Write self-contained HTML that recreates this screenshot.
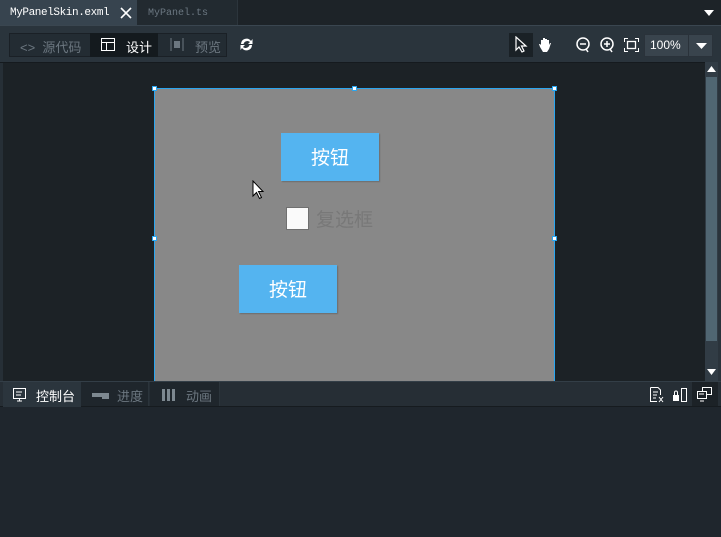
<!DOCTYPE html>
<html><head><meta charset="utf-8"><style>
*{margin:0;padding:0;box-sizing:border-box}
body{width:721px;height:537px;overflow:hidden;background:#1f262d;font-family:"Liberation Sans","Noto Sans CJK SC",sans-serif;position:relative}
.a{position:absolute}
.mono{font-family:"Liberation Mono","Noto Sans CJK SC",monospace}
</style></head><body>
<div class="a" style="left:0;top:0;width:721px;height:26px;background:#1d2328"></div>
<div class="a" style="left:0;top:0;width:137px;height:26px;background:#37444f"></div>
<div class="a mono" style="left:10px;top:7px;font-size:11px;color:#fff;letter-spacing:-0.4px">MyPanelSkin.exml</div>
<svg class="a" style="left:120px;top:7px" width="12" height="12"><path d="M1 1L11 11M11 1L1 11" stroke="#fff" stroke-width="1.6"/></svg>
<div class="a" style="left:137px;top:0;width:101px;height:26px;background:#222a30;border-right:1px solid #2c353c"></div>
<div class="a mono" style="left:148px;top:8px;font-size:10px;color:#6b7781">MyPanel.ts</div>
<svg class="a" style="left:704px;top:10px" width="10" height="6"><path d="M0 0H10L5 6Z" fill="#fff"/></svg>
<div class="a" style="left:0;top:25px;width:721px;height:38px;background:#2a343c;border-top:1px solid #3a4650;border-bottom:1px solid #151a1e"></div>
<div class="a" style="left:9px;top:33px;width:218px;height:24px;background:#232c33;border:1px solid #1a2026"></div>
<div class="a" style="left:90px;top:33px;width:68px;height:24px;background:#141a1e"></div>
<div class="a" style="left:20px;top:37px;font-size:13px;color:#6c7780">&lt;&gt;&nbsp;&nbsp;源代码</div>
<svg class="a" style="left:101px;top:38px" width="14" height="13"><rect x="0.5" y="0.5" width="13" height="12" fill="none" stroke="#fff"/><path d="M0.5 4.5H13.5M5.5 4.5V12.5" stroke="#fff"/></svg>
<div class="a" style="left:126px;top:37px;font-size:13px;color:#fff">设计</div>
<svg class="a" style="left:170px;top:38px" width="14" height="13"><path d="M1 0V13M13 0V13" stroke="#6c7780"/><rect x="4" y="3" width="6" height="7" fill="#6c7780"/></svg>
<div class="a" style="left:195px;top:37px;font-size:13px;color:#6c7780">预览</div>
<svg class="a" style="left:239px;top:37px" width="15" height="15" viewBox="0 0 15 15"><path d="M2 7A5.5 5.5 0 0 1 12 4L13.5 2V7H9L11 5A4 4 0 0 0 4.5 7Z M13 8A5.5 5.5 0 0 1 3 11L1.5 13V8H6L4 10A4 4 0 0 0 10.5 8Z" fill="#fff"/></svg>
<div class="a" style="left:509px;top:33px;width:24px;height:24px;background:#1a2126"></div>
<svg class="a" style="left:515px;top:36px" width="13" height="17" viewBox="0 0 13 17"><path d="M1 1V14L4 11L7 16L9 15L6.5 10H11Z" fill="#1a2126" stroke="#fff" stroke-width="1.2"/></svg>
<svg class="a" style="left:538px;top:36px" width="14" height="16" viewBox="0 0 14 16"><path d="M3 9V4h2V2h2V3h2V4h2V9l1-2h1l-2 6-2 3H5L2 11 1 8h1z" fill="#fff"/></svg>
<svg class="a" style="left:576px;top:37px" width="16" height="17"><circle cx="7" cy="7" r="6" fill="none" stroke="#fff" stroke-width="1.5"/><path d="M4 7H10M10 12L12 15" stroke="#fff" stroke-width="1.5"/></svg>
<svg class="a" style="left:600px;top:37px" width="16" height="17"><circle cx="7" cy="7" r="6" fill="none" stroke="#fff" stroke-width="1.5"/><path d="M4 7H10M7 4V10M10 12L12 15" stroke="#fff" stroke-width="1.5"/></svg>
<svg class="a" style="left:624px;top:38px" width="15" height="14"><path d="M0.5 4V0.5H4M11 0.5H14.5V4M14.5 10V13.5H11M4 13.5H0.5V10" fill="none" stroke="#fff"/><rect x="3.5" y="3.5" width="8" height="7" fill="none" stroke="#fff" stroke-width="1.3"/></svg>
<div class="a" style="left:644px;top:34px;width:69px;height:23px;background:#39444d;border:1px solid #2a323a"></div>
<div class="a" style="left:688px;top:34px;width:1px;height:23px;background:#2a323a"></div>
<div class="a" style="left:650px;top:38px;font-size:12px;color:#fff">100%</div>
<svg class="a" style="left:696px;top:43px" width="11" height="6"><path d="M0 0H11L5.5 6Z" fill="#fff"/></svg>
<div class="a" style="left:0;top:63px;width:705px;height:318px;background:#1c2226;border-left:3px solid #262f36"></div>
<div class="a" style="left:154px;top:88px;width:401px;height:293px;background:#888;border:1px solid #2aa6f0;border-bottom:none"></div>
<div class="a" style="left:152px;top:86px;width:5px;height:5px;background:#fff;border:1px solid #2aa6f0"></div>
<div class="a" style="left:352px;top:86px;width:5px;height:5px;background:#fff;border:1px solid #2aa6f0"></div>
<div class="a" style="left:552px;top:86px;width:5px;height:5px;background:#fff;border:1px solid #2aa6f0"></div>
<div class="a" style="left:152px;top:236px;width:5px;height:5px;background:#fff;border:1px solid #2aa6f0"></div>
<div class="a" style="left:552px;top:236px;width:5px;height:5px;background:#fff;border:1px solid #2aa6f0"></div>
<div class="a" style="left:281px;top:133px;width:98px;height:48px;background:#54b4f0;box-shadow:1px 1px 1px #6e6e6e;color:#fff;font-size:19px;text-align:center;line-height:52px">按钮</div>
<div class="a" style="left:239px;top:265px;width:98px;height:48px;background:#54b4f0;box-shadow:1px 1px 1px #6e6e6e;color:#fff;font-size:19px;text-align:center;line-height:52px">按钮</div>
<div class="a" style="left:286px;top:207px;width:23px;height:23px;background:#fafafa;border:1px solid #707070"></div>
<div class="a" style="left:316px;top:209px;font-size:19px;color:#787878;line-height:24px">复选框</div>
<svg class="a" style="left:252px;top:180px" width="13" height="20" viewBox="0 0 13 20"><path d="M1 1V16L4.5 12.5L7.5 18.5L9.5 17.5L6.5 11.5H11Z" fill="#fff" stroke="#000" stroke-width="1"/></svg>
<div class="a" style="left:705px;top:62px;width:13px;height:319px;background:#313c45"></div>
<div class="a" style="left:706px;top:77px;width:11px;height:264px;background:#506672"></div>
<svg class="a" style="left:707px;top:66px" width="9" height="6"><path d="M0 6H9L4.5 0Z" fill="#fff"/></svg>
<svg class="a" style="left:707px;top:369px" width="9" height="6"><path d="M0 0H9L4.5 6Z" fill="#fff"/></svg>
<div class="a" style="left:718px;top:62px;width:3px;height:319px;background:#2a333b"></div>
<div class="a" style="left:0;top:381px;width:721px;height:26px;background:#262e35;border-top:1px solid #333e47;border-bottom:1px solid #161b1f"></div>
<div class="a" style="left:3px;top:382px;width:78px;height:25px;background:#2b353d"></div>
<div class="a" style="left:81px;top:382px;width:68px;height:24px;background:#1f262c;border-right:1px solid #2b343b"></div>
<div class="a" style="left:150px;top:382px;width:70px;height:24px;background:#1f262c;border-right:1px solid #2b343b"></div>
<svg class="a" style="left:13px;top:388px" width="13" height="14"><rect x="0.5" y="0.5" width="12" height="10" fill="none" stroke="#fff"/><path d="M3 4H9M3 7H8M4 13H9M6.5 11V13" stroke="#fff"/></svg>
<div class="a" style="left:36px;top:386px;font-size:13px;color:#fff">控制台</div>
<svg class="a" style="left:92px;top:392px" width="17" height="8"><rect x="0" y="1" width="11" height="4" fill="#7d8890"/><rect x="10" y="1" width="7" height="6" fill="#7d8890"/></svg>
<div class="a" style="left:117px;top:386px;font-size:13px;color:#6c7780">进度</div>
<svg class="a" style="left:162px;top:389px" width="14" height="12"><rect x="0" y="0" width="3" height="12" fill="#7d8890"/><rect x="5" y="0" width="3" height="12" fill="#7d8890"/><rect x="10" y="0" width="3" height="12" fill="#7d8890"/></svg>
<div class="a" style="left:186px;top:386px;font-size:13px;color:#6c7780">动画</div>
<svg class="a" style="left:650px;top:387px" width="14" height="16"><path d="M0.5 0.5H8L10.5 3V8M0.5 0.5V14.5H7" fill="none" stroke="#fff"/><path d="M3 5H8M3 8H7M3 11H6M9 10L13 15M13 10L9 15" stroke="#fff"/></svg>
<svg class="a" style="left:672px;top:387px" width="16" height="16"><rect x="9.5" y="1.5" width="5" height="13" fill="none" stroke="#fff"/><rect x="1" y="8" width="6" height="6" fill="#fff"/><path d="M2.5 8V5.5A1.5 1.5 0 0 1 5.5 5.5V8" fill="none" stroke="#fff"/></svg>
<div class="a" style="left:692px;top:382px;width:26px;height:24px;background:#1c2227"></div>
<svg class="a" style="left:697px;top:387px" width="16" height="15"><rect x="5.5" y="0.5" width="9" height="7" fill="none" stroke="#fff"/><rect x="0.5" y="4.5" width="9" height="7" fill="#1c2227" stroke="#fff"/><path d="M3 14H7M2 7H7" stroke="#fff"/></svg>
<div class="a" style="left:0;top:407px;width:721px;height:130px;background:#1f262d"></div>
</body></html>
